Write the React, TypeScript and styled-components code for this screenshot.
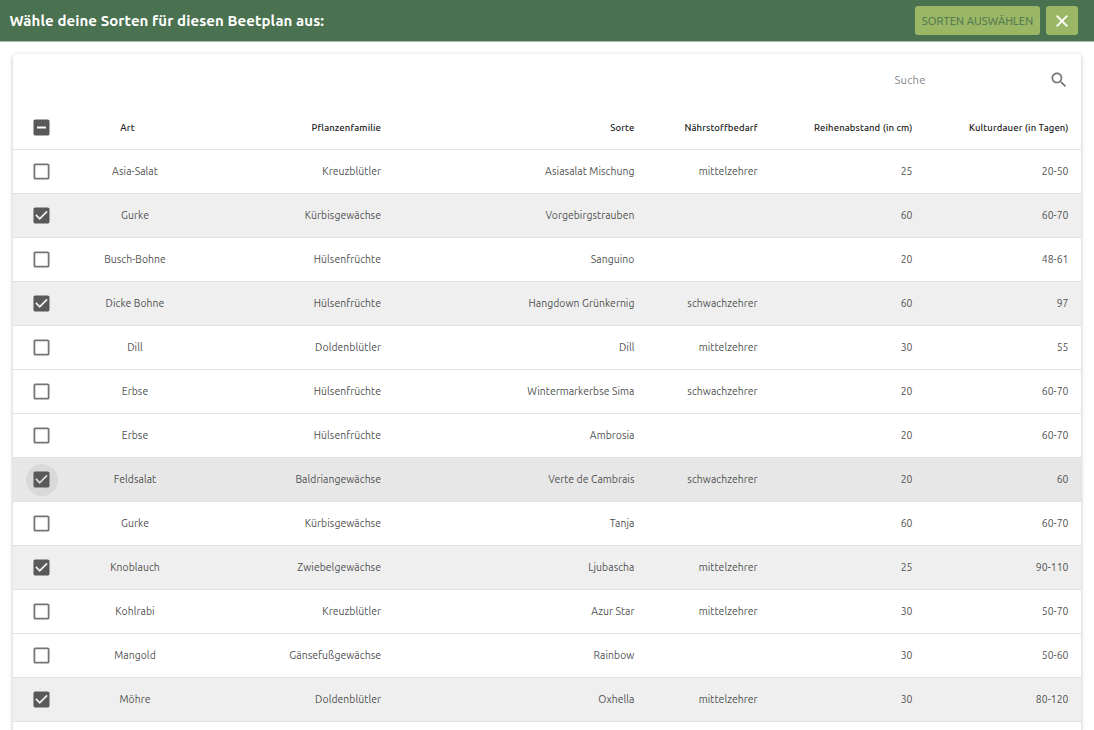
import React from "react";
import styled, { createGlobalStyle } from "styled-components";

const GlobalStyle = createGlobalStyle`
  *, *::before, *::after { box-sizing: border-box; }
  html, body { margin: 0; height: 100%; overflow: hidden; background: #fff; }
  body { font-family: Ubuntu, "Noto Sans", "Open Sans", sans-serif; color: #505050; }
  button, input { font-family: inherit; }
`;

const Page = styled.div`
  height: 730px;
  overflow: hidden;
  background: #fff;
`;

const AppBar = styled.header`
  display: flex;
  align-items: center;
  height: 42px;
  padding: 0 16px 1px 9.5px;
  background: #4a7150;
  border-bottom: 1px solid #a9bcac;
`;

const Title = styled.h1`
  flex: 1;
  margin: 0;
  padding-top: 1px;
  color: #fff;
  font-size: 15px;
  line-height: 20px;
  font-weight: 700;
  letter-spacing: 0.08px;
  white-space: nowrap;
`;

const Button = styled.button<{ $width: number }>`
  display: flex;
  align-items: center;
  justify-content: center;
  width: ${({ $width }) => $width}px;
  height: 29px;
  margin-left: 6px;
  padding: 1px 0 0;
  border: 0;
  border-radius: 3px;
  background: #99b765;
  color: #4a7150;
  font-size: 11.2px;
  letter-spacing: 0.06px;
  white-space: nowrap;
`;

const Card = styled.main`
  width: 1068.5px;
  height: 760px;
  margin: 12px 0 0 12.5px;
  border-radius: 4px;
  background: #fff;
  box-shadow: 0 1px 4px rgba(0, 0, 0, 0.26);
`;

const Toolbar = styled.div`
  display: flex;
  align-items: center;
  justify-content: flex-end;
  height: 52px;
  padding-right: 12px;
`;

const SearchInput = styled.input`
  width: 154.5px;
  height: 24px;
  padding: 0;
  border: 0;
  outline: 0;
  background: transparent;
  font-size: 11.2px;
  letter-spacing: 0.2px;
  &::placeholder { color: #858585; opacity: 1; }
`;

const Row = styled.div<{ $tone?: "selected" | "active" }>`
  display: grid;
  grid-template-columns: 58px 129px 181.5px 253.5px 123px 155px 156px;
  align-items: center;
  height: 44px;
  border-bottom: 1px solid #e1e1e1;
  background: ${({ $tone }) =>
    $tone === "active" ? "#e7e7e7" : $tone === "selected" ? "#efefef" : "#fff"};
`;

const Cell = styled.div<{ $center?: boolean }>`
  text-align: ${({ $center }) => ($center ? "center" : "right")};
  padding-bottom: 2px;
  font-size: 10.4px;
  line-height: 16px;
  letter-spacing: 0.06px;
  white-space: nowrap;
`;

const HeadCell = styled(Cell)`
  color: #222;
  font-size: 9.5px;
  font-weight: 500;
  letter-spacing: 0.11px;
  padding-bottom: 0;
  padding-right: ${({ $center }) => ($center ? 15 : 0)}px;
`;

const Toggle = styled.span<{ $halo?: boolean }>`
  display: flex;
  align-items: center;
  justify-content: center;
  width: 32px;
  height: 32px;
  margin-left: 13px;
  border-radius: 50%;
  background: ${({ $halo }) => ($halo ? "#d9d9d9" : "transparent")};
`;

const BoxIcon = styled.svg<{ $filled: boolean }>`
  display: block;
  width: 21px;
  height: 21px;
  fill: ${({ $filled }) => ($filled ? "#595959" : "#757575")};
`;

const shapes = {
  empty: "M19 5v14H5V5h14m0-2H5c-1.1 0-2 .9-2 2v14c0 1.1.9 2 2 2h14c1.1 0 2-.9 2-2V5c0-1.1-.9-2-2-2z",
  checked:
    "M19 3H5c-1.11 0-2 .9-2 2v14c0 1.1.89 2 2 2h14c1.11 0 2-.9 2-2V5c0-1.1-.89-2-2-2zm-9 14l-5-5 1.41-1.41L10 14.17l7.59-7.59L19 8l-9 9z",
  mixed: "M19 3H5c-1.1 0-2 .9-2 2v14c0 1.1.9 2 2 2h14c1.1 0 2-.9 2-2V5c0-1.1-.9-2-2-2zm-2 10H7v-2h10v2z",
};

function Checkbox({ state, halo }: { state: keyof typeof shapes; halo?: boolean }) {
  return (
    <Toggle $halo={halo}>
      <BoxIcon viewBox="0.2 0.2 23.6 23.6" $filled={state !== "empty"}>
        <path d={shapes[state]} />
      </BoxIcon>
    </Toggle>
  );
}

type Variety = {
  art: string;
  family: string;
  name: string;
  need: string;
  spacing: string;
  days: string;
  tone?: "selected" | "active";
};

const varieties: Variety[] = [
  { art: "Asia-Salat", family: "Kreuzblütler", name: "Asiasalat Mischung", need: "mittelzehrer", spacing: "25", days: "20-50" },
  { art: "Gurke", family: "Kürbisgewächse", name: "Vorgebirgstrauben", need: "", spacing: "60", days: "60-70", tone: "selected" },
  { art: "Busch-Bohne", family: "Hülsenfrüchte", name: "Sanguino", need: "", spacing: "20", days: "48-61" },
  { art: "Dicke Bohne", family: "Hülsenfrüchte", name: "Hangdown Grünkernig", need: "schwachzehrer", spacing: "60", days: "97", tone: "selected" },
  { art: "Dill", family: "Doldenblütler", name: "Dill", need: "mittelzehrer", spacing: "30", days: "55" },
  { art: "Erbse", family: "Hülsenfrüchte", name: "Wintermarkerbse Sima", need: "schwachzehrer", spacing: "20", days: "60-70" },
  { art: "Erbse", family: "Hülsenfrüchte", name: "Ambrosia", need: "", spacing: "20", days: "60-70" },
  { art: "Feldsalat", family: "Baldriangewächse", name: "Verte de Cambrais", need: "schwachzehrer", spacing: "20", days: "60", tone: "active" },
  { art: "Gurke", family: "Kürbisgewächse", name: "Tanja", need: "", spacing: "60", days: "60-70" },
  { art: "Knoblauch", family: "Zwiebelgewächse", name: "Ljubascha", need: "mittelzehrer", spacing: "25", days: "90-110", tone: "selected" },
  { art: "Kohlrabi", family: "Kreuzblütler", name: "Azur Star", need: "mittelzehrer", spacing: "30", days: "50-70" },
  { art: "Mangold", family: "Gänsefußgewächse", name: "Rainbow", need: "", spacing: "30", days: "50-60" },
  { art: "Möhre", family: "Doldenblütler", name: "Oxhella", need: "mittelzehrer", spacing: "30", days: "80-120", tone: "selected" },
];

const headings = ["Pflanzenfamilie", "Sorte", "Nährstoffbedarf", "Reihenabstand (in cm)", "Kulturdauer (in Tagen)"];

export default function App() {
  return (
    <Page>
      <GlobalStyle />
      <AppBar>
        <Title>Wähle deine Sorten für diesen Beetplan aus:</Title>
        <Button $width={125}>SORTEN AUSWÄHLEN</Button>
        <Button $width={32} aria-label="Schließen">
          <svg width="20" height="20" viewBox="0 0 24 24" fill="#fff" stroke="#fff" strokeWidth="0.4">
            <path d="M19 6.41L17.59 5 12 10.59 6.41 5 5 6.41 10.59 12 5 17.59 6.41 19 12 13.41 17.59 19 19 17.59 13.41 12z" />
          </svg>
        </Button>
      </AppBar>
      <Card>
        <Toolbar>
          <SearchInput placeholder="Suche" />
          <svg width="20" height="20" viewBox="0 0 24 24" fill="#757575">
            <path d="M15.5 14h-.79l-.28-.27C15.41 12.59 16 11.11 16 9.5 16 5.91 13.09 3 9.5 3S3 5.91 3 9.5 5.91 16 9.5 16c1.61 0 3.09-.59 4.23-1.57l.27.28v.79l5 4.99L20.49 19l-4.99-5zm-6 0C7.01 14 5 11.99 5 9.5S7.01 5 9.5 5 14 7.01 14 9.5 11.99 14 9.5 14z" />
          </svg>
        </Toolbar>
        <Row>
          <Checkbox state="mixed" />
          <HeadCell $center>Art</HeadCell>
          {headings.map((heading) => (
            <HeadCell key={heading}>{heading}</HeadCell>
          ))}
        </Row>
        {varieties.map((v) => (
          <Row key={v.art + v.name} $tone={v.tone}>
            <Checkbox state={v.tone ? "checked" : "empty"} halo={v.tone === "active"} />
            <Cell $center>{v.art}</Cell>
            <Cell>{v.family}</Cell>
            <Cell>{v.name}</Cell>
            <Cell>{v.need}</Cell>
            <Cell>{v.spacing}</Cell>
            <Cell>{v.days}</Cell>
          </Row>
        ))}
      </Card>
    </Page>
  );
}
